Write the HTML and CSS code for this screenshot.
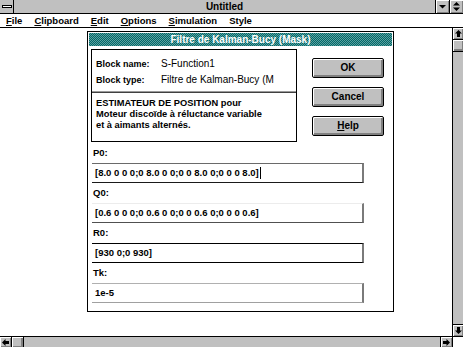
FILE: index.html
```html
<!DOCTYPE html>
<html lang="fr">

<head>
    <meta charset="UTF-8">
    <title>Untitled</title>
    <link rel="stylesheet" href="styles.css">
</head>

<body>
    <div class="screen">
        <!-- barre de titre -->
        <div class="titlebar">
            <div class="sysbox"><span class="dash"></span></div>
            <div class="apptitle">Untitled</div>
            <div class="tbtn">
                <svg width="7" height="5" viewBox="0 0 7 5"><path d="M0 1h7L3.5 4.5z" fill="#000"/></svg>
            </div>
            <div class="tbtn">
                <svg width="7" height="9" viewBox="0 0 7 9"><path d="M3.5 0L7 3.5H0zM0 5.5h7L3.5 9z" fill="#000"/></svg>
            </div>
        </div>
        <!-- menu -->
        <div class="menubar">
            <span><u>F</u>ile</span>
            <span><u>C</u>lipboard</span>
            <span><u>E</u>dit</span>
            <span><u>O</u>ptions</span>
            <span><u>S</u>imulation</span>
            <span>Style</span>
        </div>
        <div class="client">
            <div class="desk">
                <div class="dialog">
                    <div class="dlg-title">Filtre de Kalman-Bucy (Mask)</div>
                    <div class="dlg-body">
                        <div class="dlg-top">
                            <div class="info">
                                <div class="info-row"><span class="info-key">Block name:</span><span class="info-val">S-Function1</span></div>
                                <div class="info-row"><span class="info-key">Block type:</span><span class="info-val">Filtre de Kalman-Bucy (M</span></div>
                                <div class="info-sep"></div>
                                <div class="info-desc">ESTIMATEUR DE POSITION pour<br>Moteur discoïde à réluctance variable<br>et à aimants alternés.</div>
                            </div>
                            <div class="btns">
                                <div class="btn">OK</div>
                                <div class="btn">Cancel</div>
                                <div class="btn"><u>H</u>elp</div>
                            </div>
                        </div>
                        <div class="params">
                            <div class="param-label">P0:</div>
                            <div class="param-field f-p0">[8.0 0 0 0;0 8.0 0 0;0 0 8.0 0;0 0 0 8.0]<span class="caret"></span></div>
                            <div class="param-label">Q0:</div>
                            <div class="param-field f-q0">[0.6 0 0 0;0 0.6 0 0;0 0 0.6 0;0 0 0 0.6]</div>
                            <div class="param-label">R0:</div>
                            <div class="param-field f-r0">[930 0;0 930]</div>
                            <div class="param-label">Tk:</div>
                            <div class="param-field f-tk">1e-5</div>
                        </div>
                    </div>
                </div>
            </div>
            <!-- ascenseur vertical -->
            <div class="vscroll">
                <div class="sbtn sbtn-up">
                    <svg width="7" height="7" viewBox="0 0 7 7"><path d="M3.5 0L7 3.5H5V7H2V3.5H0z" fill="#000"/></svg>
                </div>
                <div class="vthumb"></div>
                <div class="track"></div>
                <div class="sbtn sbtn-down">
                    <svg width="7" height="7" viewBox="0 0 7 7"><path d="M3.5 7L7 3.5H5V0H2V3.5H0z" fill="#000"/></svg>
                </div>
            </div>
        </div>
        <!-- ascenseur horizontal -->
        <div class="hscroll">
            <div class="sbtn sbtn-left">
                <svg width="7" height="7" viewBox="0 0 7 7"><path d="M0 3.5L3.5 0V2H7V5H3.5V7z" fill="#000"/></svg>
            </div>
            <div class="hthumb"></div>
            <div class="track"></div>
            <div class="sbtn sbtn-right">
                <svg width="7" height="7" viewBox="0 0 7 7"><path d="M7 3.5L3.5 0V2H0V5H3.5V7z" fill="#000"/></svg>
            </div>
            <div class="corner"></div>
        </div>
    </div>
</body>

</html>
```

FILE: styles.css
```css
* {
    margin: 0;
    padding: 0;
    box-sizing: border-box;
}

body {
    width: 463px;
    height: 347px;
    overflow: hidden;
    background: #fff;
    color: #000;
    font-family: "Liberation Sans", Arial, sans-serif;
    font-size: 9px;
    font-weight: bold;
}

.screen {
    height: 347px;
    display: flex;
    flex-direction: column;
}

/* barre de titre */
.titlebar {
    height: 14px;
    display: flex;
    background: #c0c0c0;
    border-bottom: 1px solid #000;
}

.sysbox {
    width: 14px;
    display: flex;
    align-items: center;
    justify-content: center;
    border-right: 1px solid #000;
}

.sysbox .dash {
    width: 10px;
    height: 3px;
    background: #fff;
    border: 1px solid #000;
}

.apptitle {
    flex: 1;
    text-align: center;
    font-size: 10px;
    line-height: 13px;
}

.tbtn {
    width: 14px;
    display: flex;
    align-items: center;
    justify-content: center;
    border-left: 1px solid #000;
    box-shadow: inset 1px 1px #fff, inset -1px -1px #808080;
}

/* menu */
.menubar {
    height: 14px;
    display: flex;
    gap: 12px;
    padding-left: 6px;
    font-size: 9.5px;
    line-height: 13px;
    border-bottom: 1px solid #000;
}

.client {
    flex: 1;
    display: flex;
    min-height: 0;
}

.desk {
    flex: 1;
    padding: 3px 0 0 87px;
}

/* boite de dialogue */
.dialog {
    width: 307px;
    height: 281px;
    border: 1px solid #000;
    padding: 1px;
    background: #fff;
}

.dlg-title {
    height: 13px;
    line-height: 13px;
    text-align: center;
    color: #fff;
    font-size: 10px;
    background-color: #008080;
    background-image: repeating-conic-gradient(#006a6a 0 25%, #5e9e9e 0 50%);
    background-size: 2px 2px;
}

.dlg-body {
    padding: 3px 0 0 2px;
}

.dlg-top {
    display: flex;
}

.info {
    width: 206px;
    height: 93px;
    border: 1px solid #000;
    padding-top: 6px;
}

.info-row {
    display: flex;
    line-height: 16px;
    padding-left: 4px;
}

.info-key {
    width: 65px;
}

.info-val {
    font-weight: normal;
    font-size: 10px;
    white-space: nowrap;
}

.info-sep {
    height: 2px;
    margin-top: 3px;
    border-top: 1px solid #9a9a9a;
    border-bottom: 1px solid #404040;
}

.info-desc {
    padding: 5px 0 0 4px;
    line-height: 11px;
    font-size: 9.3px;
}

.btns {
    margin-left: 15px;
    padding-top: 9px;
    display: flex;
    flex-direction: column;
    gap: 9px;
}

.btn {
    width: 72px;
    height: 20px;
    line-height: 18px;
    text-align: center;
    font-size: 10px;
    background: #c0c0c0;
    border: 1px solid #000;
    border-radius: 2px;
    box-shadow: inset 1px 1px #fff, inset -2px -2px #808080;
}

/* parametres */
.params {
    margin-top: 1px;
}

.param-label {
    height: 20px;
    line-height: 20px;
    padding-left: 2px;
    font-size: 9.5px;
}

.param-field {
    width: 272px;
    height: 20px;
    margin-left: 1px;
    padding-left: 3px;
    line-height: 18px;
    font-size: 9.5px;
    white-space: nowrap;
    border-top: 1px solid #b0b0b0;
    border-bottom: 1px solid #a0a0a0;
    border-right: 2px solid #7a7a7a;
}

.f-p0 {
    border-top-color: #6a6a6a;
    border-bottom-color: #1a1a1a;
}

.f-q0 {
    border-top-color: #ececec;
    border-bottom-color: #505050;
}

.f-r0 {
    border-top-color: #000;
    border-bottom-color: #000;
}

.caret {
    display: inline-block;
    width: 1px;
    height: 12px;
    margin-left: 1px;
    background: #000;
    vertical-align: middle;
}

/* ascenseurs */
.sbtn {
    display: flex;
    align-items: center;
    justify-content: center;
    background: #c0c0c0;
    box-shadow: inset 1px 1px #fff, inset -1px -1px #808080;
}

.track {
    flex: 1;
    background: #c0c0c0;
}

.vscroll {
    width: 11px;
    display: flex;
    flex-direction: column;
    border-left: 1px solid #000;
}

.vscroll .sbtn {
    height: 12px;
}

.sbtn-up {
    border-bottom: 1px solid #000;
}

.sbtn-down {
    border-top: 1px solid #000;
}

.vthumb {
    height: 12px;
    background: #c0c0c0;
    border-bottom: 1px solid #000;
    box-shadow: inset 1px 1px #fff, inset -1px -2px #808080;
}

.hscroll {
    height: 11px;
    display: flex;
    border-top: 1px solid #000;
}

.hscroll .sbtn {
    width: 12px;
}

.sbtn-left {
    border-right: 1px solid #000;
}

.sbtn-right {
    border-left: 1px solid #000;
}

.hthumb {
    width: 12px;
    background: #c0c0c0;
    border-right: 1px solid #000;
    box-shadow: inset 1px 1px #fff, inset -2px -1px #808080;
}

.corner {
    width: 11px;
    background: #fff;
    border-left: 1px solid #000;
}
```
